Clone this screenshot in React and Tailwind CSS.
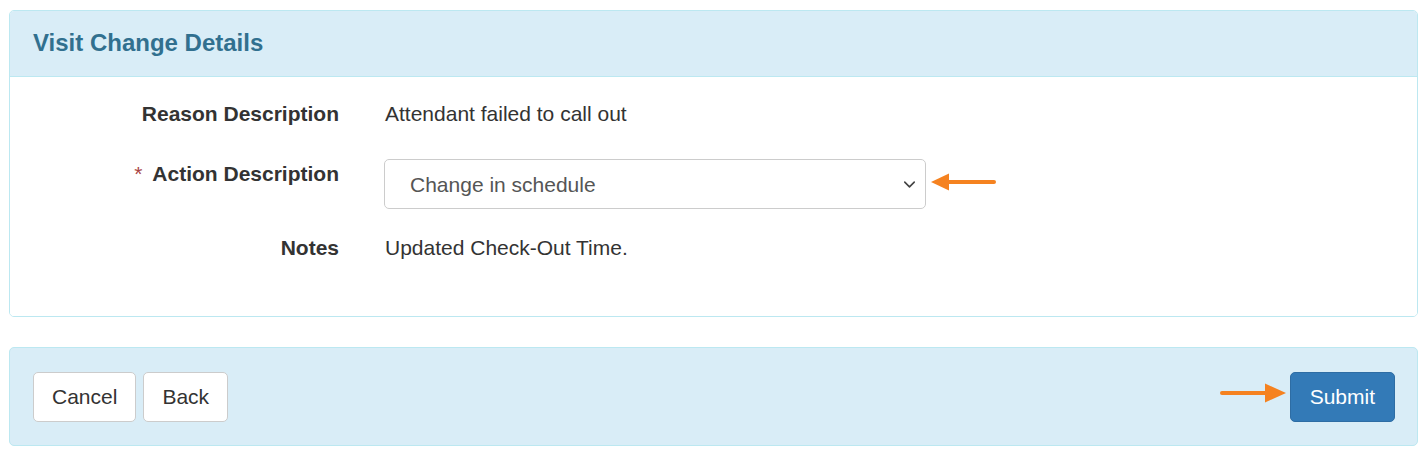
import { ChevronDown } from "lucide-react";

function ArrowLeft({ className }) {
  return (
    <svg className={className} width="66" height="20" viewBox="0 0 66 20">
      <path d="M0 10 L18 1.5 L18 18.5 Z" fill="#f58220" />
      <line x1="15" y1="10" x2="63" y2="10" stroke="#f58220" strokeWidth="4" strokeLinecap="round" />
    </svg>
  );
}

function ArrowRight({ className }) {
  return (
    <svg className={className} width="66" height="20" viewBox="0 0 66 20">
      <path d="M66 10 L45 0.5 L45 19.5 Z" fill="#f58220" />
      <line x1="2" y1="10" x2="50" y2="10" stroke="#f58220" strokeWidth="4" strokeLinecap="round" />
    </svg>
  );
}

export default function App() {
  return (
    <div className="bg-white min-h-[454px] pt-[10px] pl-[9px] pr-[8px] font-['Liberation_Sans',Arial,sans-serif] text-[#333]">
      {/* details panel */}
      <div className="border border-[#bce8f1] rounded-[5px] overflow-hidden">
        <div className="bg-[#d9edf7] border-b border-[#bce8f1] h-[66px] flex items-center px-[23px]">
          <h3 className="text-[24px] font-bold text-[#31708f] leading-none pb-[2px]">Visit Change Details</h3>
        </div>
        <div className="bg-white pt-[24px] pb-[55px] text-[21px] leading-[26px]">
          <div className="flex">
            <div className="w-[329px] text-right font-bold">Reason Description</div>
            <div className="ml-[46px]">Attendant failed to call out</div>
          </div>
          <div className="flex mt-[32px]">
            <div className="w-[329px] text-right font-bold pt-[2px]">
              <span className="text-[#a94442] font-normal mr-[10px]">*</span>
              Action Description
            </div>
            <div className="ml-[45px] relative">
              <div className="w-[542px] h-[50px] border border-[#ccc] rounded-[5px] flex items-center justify-between pl-[25px] pr-[6px] text-[#555]">
                <span className="pt-[2px]">Change in schedule</span>
                <ChevronDown size={19} strokeWidth={2} className="text-[#444] mt-[1px]" />
              </div>
              <ArrowLeft className="absolute left-[547px] top-[13px]" />
            </div>
          </div>
          <div className="flex mt-[26px]">
            <div className="w-[329px] text-right font-bold">Notes</div>
            <div className="ml-[46px]">Updated Check-Out Time.</div>
          </div>
        </div>
      </div>

      {/* footer actions */}
      <div className="mt-[30px] bg-[#d9edf7] border border-[#bce8f1] rounded-[5px] h-[99px] flex items-center justify-between pl-[23px] pr-[22px] text-[21px]">
        <div className="flex gap-[7px]">
          <button className="h-[50px] px-[18px] bg-white border border-[#ccc] rounded-[5px] text-[#333]">Cancel</button>
          <button className="h-[50px] px-[18px] bg-white border border-[#ccc] rounded-[5px] text-[#333]">Back</button>
        </div>
        <div className="relative">
          <ArrowRight className="absolute right-[109px] top-[11px]" />
          <button className="h-[50px] px-[19px] bg-[#337ab7] border border-[#2e6da4] rounded-[5px] text-white">Submit</button>
        </div>
      </div>
    </div>
  );
}
